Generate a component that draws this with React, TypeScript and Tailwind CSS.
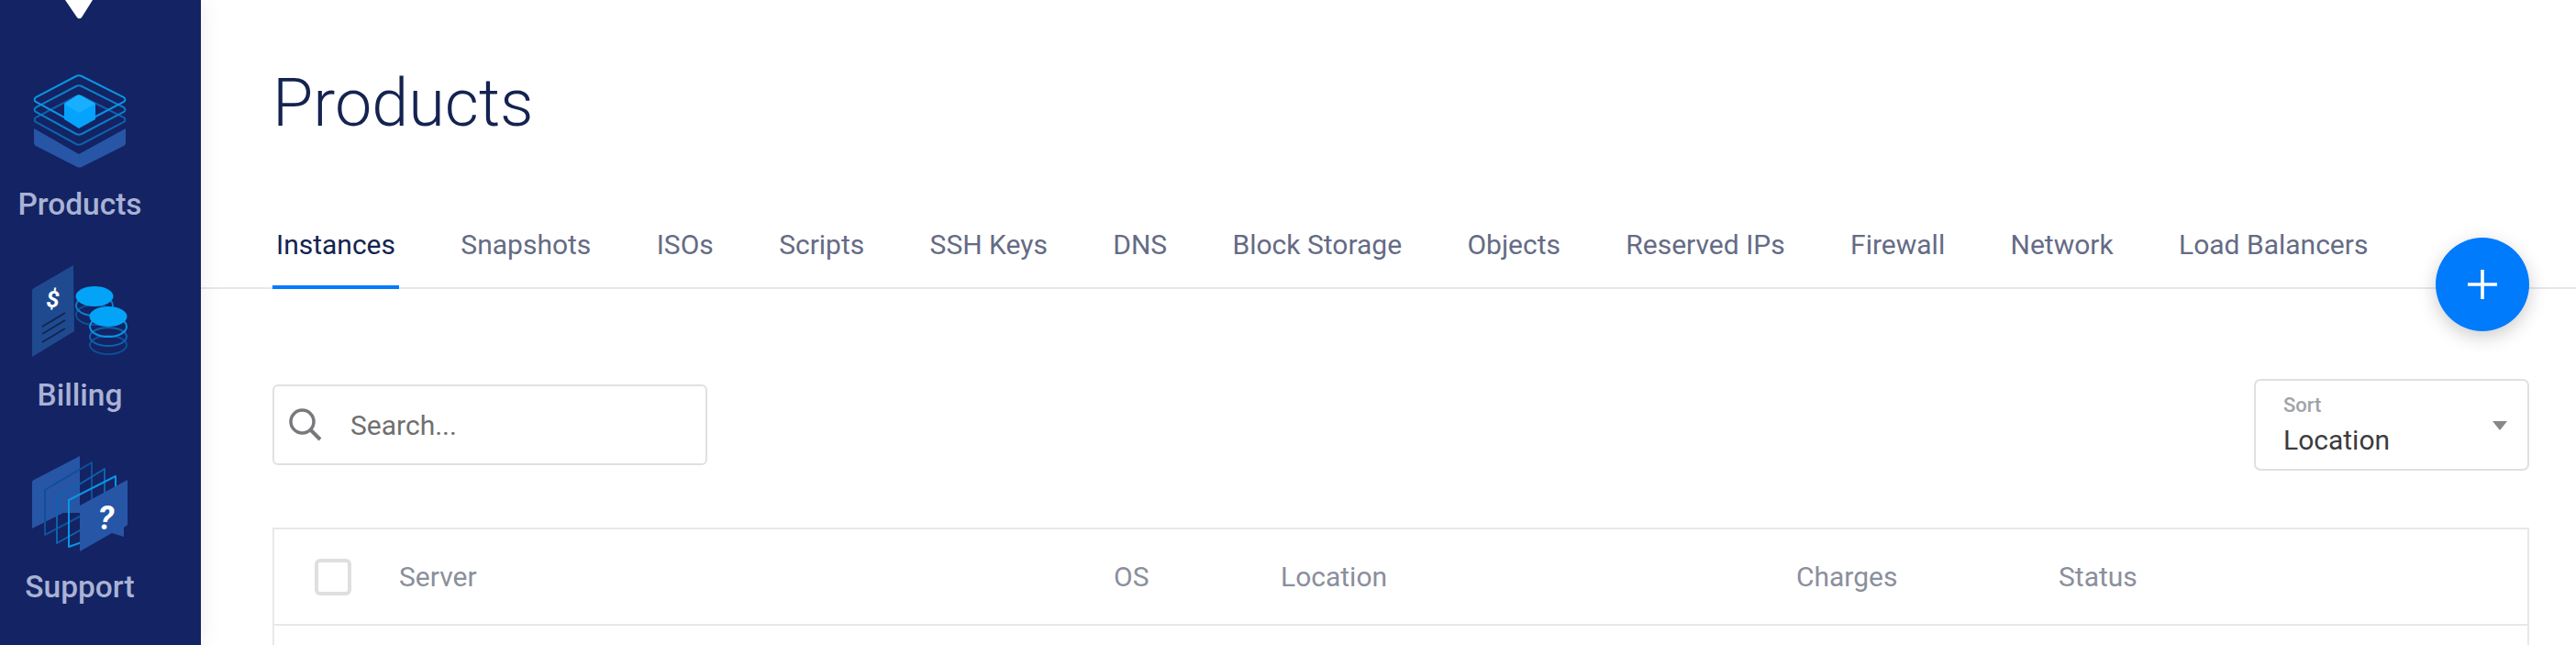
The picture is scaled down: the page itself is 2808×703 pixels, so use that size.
const tabs = [
  "Instances",
  "Snapshots",
  "ISOs",
  "Scripts",
  "SSH Keys",
  "DNS",
  "Block Storage",
  "Objects",
  "Reserved IPs",
  "Firewall",
  "Network",
  "Load Balancers",
]

function ProductsIcon() {
  return (
    <svg width="104" height="108" viewBox="35 78 104 108" fill="none">
      <path
        d="M37 140l49 28 51-28v16a4 4 0 0 1-2 3l-46 23a6 6 0 0 1-5 0l-45-23a4 4 0 0 1-2-3z"
        fill="#2756a6"
      />
      <path d="M39 133a3 3 0 0 1 0-5l44-23a7 7 0 0 1 6 0l46 23a3 3 0 0 1 0 5l-46 24a7 7 0 0 1-6 0z" stroke="#0d62ae" strokeWidth="2" />
      <path d="M39 122a3 3 0 0 1 0-5l44-23a7 7 0 0 1 6 0l46 23a3 3 0 0 1 0 5l-46 24a7 7 0 0 1-6 0z" stroke="#0a7fcb" strokeWidth="2" />
      <path d="M39 111a3 3 0 0 1 0-5l44-23a7 7 0 0 1 6 0l46 23a3 3 0 0 1 0 5l-46 24a7 7 0 0 1-6 0z" stroke="#0a95e4" strokeWidth="2" />
      <path d="M70 113l14-9a4 4 0 0 1 4 0l16 9v17l-18 10-16-10z" fill="#05a3fb" />
      <path d="M70 113l14-9a4 4 0 0 1 4 0l16 9-18 10z" fill="#19afff" />
    </svg>
  )
}

function BillingIcon() {
  return (
    <svg width="104" height="104" viewBox="35 288 104 104" fill="none">
      <path d="M35 317a3 3 0 0 1 2-3l43-25 1 72-46 28z" fill="#1f4a8f" />
      <text x="57.5" y="335" fill="#fff" fontFamily="Roboto, sans-serif" fontSize="26" fontWeight="700" fontStyle="italic" textAnchor="middle">$</text>
      <path d="M46 356l25-15M46 364l25-15M46 373l25-15" stroke="#14254f" strokeWidth="2" />
      <ellipse cx="103" cy="343" rx="20" ry="11" stroke="#0d4f97" strokeWidth="2" />
      <ellipse cx="103" cy="333" rx="20" ry="11" stroke="#0a7fcb" strokeWidth="2" />
      <ellipse cx="103" cy="323" rx="20.5" ry="11" fill="#03a3f7" />
      <ellipse cx="118" cy="376" rx="20" ry="10" stroke="#0d4f97" strokeWidth="2" />
      <ellipse cx="118" cy="367" rx="20" ry="10" stroke="#0d62ae" strokeWidth="2" />
      <ellipse cx="118" cy="356" rx="20" ry="11" stroke="#0a95e4" strokeWidth="2" />
      <ellipse cx="118" cy="345" rx="20.5" ry="11" fill="#03a3f7" />
    </svg>
  )
}

function SupportIcon() {
  return (
    <svg width="104" height="108" viewBox="35 494 104 108" fill="none">
      <path d="M35 524a3 3 0 0 1 2-3l50-26v62l-18 0-34 17z" fill="#2756a6" />
      <path d="M49 532l51-30v52l-51 27z" stroke="#0f4f9d" strokeWidth="2" strokeLinejoin="round" />
      <path d="M62 541l52-32v52l-52 29z" stroke="#0d62ae" strokeWidth="2" strokeLinejoin="round" />
      <path d="M75 543l51-26v59l-51 18z" stroke="#0a95e4" strokeWidth="2" strokeLinejoin="round" />
      <path d="M87 549l52-28v49l-4 3v10l-13-4-35 20z" fill="#2756a6" />
      <text x="115.5" y="575" fill="#fff" fontFamily="Roboto, sans-serif" fontSize="36" fontWeight="700" fontStyle="italic" textAnchor="middle">?</text>
    </svg>
  )
}

function Sidebar() {
  return (
    <aside className="relative z-10 w-[219px] h-[703px] shrink-0 bg-[#142363] overflow-hidden shadow-[0_0_24px_rgba(0,0,0,0.08)]">
      <div className="w-[174px] flex flex-col items-center">
        <svg width="30" height="21" viewBox="0 0 30 21" className="block mr-[3px]">
          <path d="M0 0h30L18 19a3 3 0 0 1-5 0z" fill="#fff" />
        </svg>
        <div className="mt-[57px] flex flex-col items-center">
          <ProductsIcon />
          <span className="mt-[19px] text-[33.5px] leading-[36px] font-medium text-[#a9b2d5]">Products</span>
        </div>
        <div className="mt-[47px] flex flex-col items-center">
          <BillingIcon />
          <span className="mt-[21px] text-[33.5px] leading-[36px] font-medium text-[#a9b2d5]">Billing</span>
        </div>
        <div className="mt-[47px] flex flex-col items-center">
          <SupportIcon />
          <span className="mt-[18px] text-[33.5px] leading-[36px] font-medium text-[#a9b2d5]">Support</span>
        </div>
      </div>
    </aside>
  )
}

export default function App() {
  return (
    <div className="flex h-[703px] overflow-hidden bg-white font-['Roboto',sans-serif]">
      <Sidebar />
      <main className="relative flex-1 min-w-0">
        <h1 className="pl-[78px] pt-[71px] text-[72px] leading-[84px] font-light text-[#142350]">Products</h1>

        <nav className="mt-[95px] h-[65px] pl-[78px] flex items-start gap-[63.35px] border-b-2 border-[#e6e6ec]">
          {tabs.map((tab, i) => (
            <div
              key={tab}
              className={
                i === 0
                  ? "h-[65px] px-1 text-[30px] leading-[34px] text-[#142350] border-b-4 border-[#007bfc]"
                  : "h-[65px] px-1 text-[30px] leading-[34px] text-[#656b85]"
              }
            >
              {tab}
            </div>
          ))}
        </nav>

        <button className="absolute left-[2436px] top-[259px] w-[102px] h-[102px] rounded-full bg-[#007bfc] flex items-center justify-center shadow-[0_6px_20px_rgba(0,0,0,0.2)]">
          <svg width="32" height="32" viewBox="0 0 32 32">
            <path d="M14.2 0h3.6v14.2H32v3.6H17.8V32h-3.6V17.8H0v-3.6h14.2z" fill="#fff" />
          </svg>
        </button>

        <div className="mt-[98px] pl-[78px] pr-[51px] flex items-center justify-between">
          <div className="w-[474px] h-[88px] border-2 border-[#e0e0e0] rounded-[6px] flex items-center pl-[16px]">
            <svg width="36" height="36" viewBox="0 0 36 36" fill="none" stroke="#77797d">
              <circle cx="14.5" cy="14.5" r="12.5" strokeWidth="3.5" />
              <path d="M23 23l11 11" strokeWidth="4" />
            </svg>
            <span className="ml-[31px] text-[30px] text-[#6f6f6f]">Search...</span>
          </div>
          <div className="relative w-[300px] h-[100px] border-2 border-[#e0e0e0] rounded-[7px] pl-[30px] pt-[15px]">
            <div className="text-[22px] leading-[24px] font-medium text-[#a0a4a8]">Sort</div>
            <div className="mt-[8px] text-[30px] leading-[36px] text-[#3c3c3c]">Location</div>
            <span className="absolute right-[22px] top-[44px] w-0 h-0 border-x-8 border-t-[10px] border-x-transparent border-t-[#888]" />
          </div>
        </div>

        <div className="ml-[78px] mr-[51px] mt-[62px] h-[200px] border-2 border-b-0 border-[#e8e8ec]">
          <div className="h-[105px] border-b-2 border-[#e8e8ec] flex items-center text-[30px] text-[#8a8f9c]">
            <span className="ml-[44px] w-[40px] h-[40px] shrink-0 border-4 border-[#dfdfe2] rounded-[6px]" />
            <span className="ml-[52px] w-[779px]">Server</span>
            <span className="w-[182px]">OS</span>
            <span className="w-[562px]">Location</span>
            <span className="w-[286px]">Charges</span>
            <span>Status</span>
          </div>
        </div>
      </main>
    </div>
  )
}
